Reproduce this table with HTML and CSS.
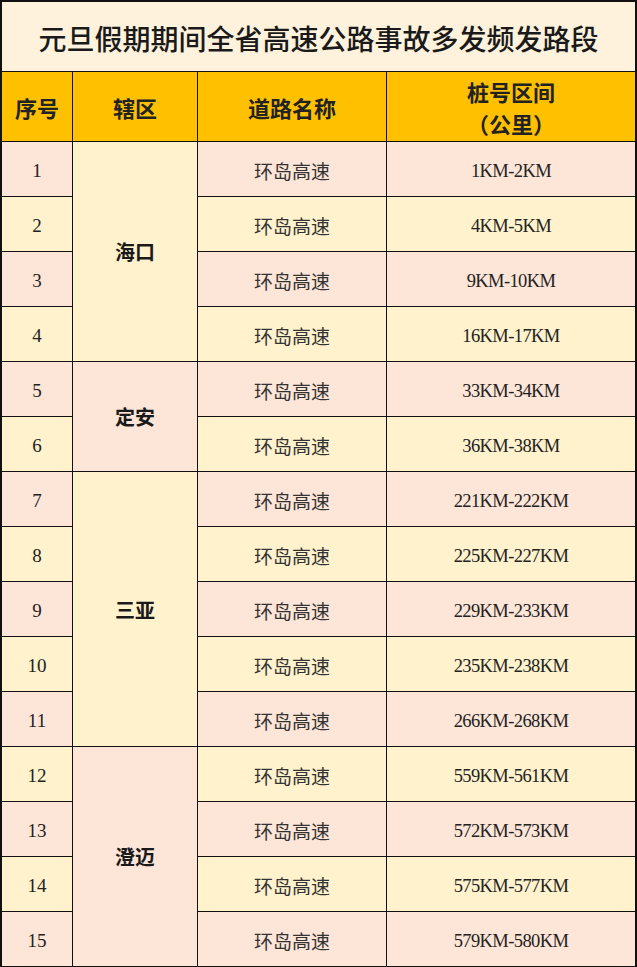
FILE: index.html
```html
<!DOCTYPE html>
<html lang="zh-CN">
<head>
<meta charset="utf-8">
<title>元旦假期期间全省高速公路事故多发频发路段</title>
<link rel="stylesheet" href="styles.css">
</head>
<body>
<div class="sheet">
  <div class="title">元旦假期期间全省高速公路事故多发频发路段</div>

  <div class="head c1">序号</div>
  <div class="head c2">辖区</div>
  <div class="head c3">道路名称</div>
  <div class="head c4"><span>桩号区间</span><span>（公里）</span></div>

  <div class="num pink">1</div>
  <div class="dist cream span4">海口</div>
  <div class="road pink">环岛高速</div>
  <div class="km pink">1KM-2KM</div>

  <div class="num cream">2</div>
  <div class="road cream">环岛高速</div>
  <div class="km cream">4KM-5KM</div>

  <div class="num pink">3</div>
  <div class="road pink">环岛高速</div>
  <div class="km pink">9KM-10KM</div>

  <div class="num cream">4</div>
  <div class="road cream">环岛高速</div>
  <div class="km cream">16KM-17KM</div>

  <div class="num pink">5</div>
  <div class="dist pink span2">定安</div>
  <div class="road pink">环岛高速</div>
  <div class="km pink">33KM-34KM</div>

  <div class="num cream">6</div>
  <div class="road cream">环岛高速</div>
  <div class="km cream">36KM-38KM</div>

  <div class="num pink">7</div>
  <div class="dist cream span5">三亚</div>
  <div class="road pink">环岛高速</div>
  <div class="km pink">221KM-222KM</div>

  <div class="num cream">8</div>
  <div class="road cream">环岛高速</div>
  <div class="km cream">225KM-227KM</div>

  <div class="num pink">9</div>
  <div class="road pink">环岛高速</div>
  <div class="km pink">229KM-233KM</div>

  <div class="num cream">10</div>
  <div class="road cream">环岛高速</div>
  <div class="km cream">235KM-238KM</div>

  <div class="num pink">11</div>
  <div class="road pink">环岛高速</div>
  <div class="km pink">266KM-268KM</div>

  <div class="num cream">12</div>
  <div class="dist pink span4">澄迈</div>
  <div class="road cream">环岛高速</div>
  <div class="km cream">559KM-561KM</div>

  <div class="num pink">13</div>
  <div class="road pink">环岛高速</div>
  <div class="km pink">572KM-573KM</div>

  <div class="num cream">14</div>
  <div class="road cream">环岛高速</div>
  <div class="km cream">575KM-577KM</div>

  <div class="num pink">15</div>
  <div class="road pink">环岛高速</div>
  <div class="km pink">579KM-580KM</div>
</div>
</body>
</html>
```

FILE: styles.css
```css
html, body {
  margin: 0;
  padding: 0;
  background: #ffffff;
}

.sheet {
  width: 637px;
  box-sizing: border-box;
  border: 2px solid #111;
  background: #111;
  display: grid;
  grid-template-columns: 70px 124px 188px 1fr;
  grid-template-rows: 69px 69px repeat(15, 54px);
  gap: 1px;
  font-family: "Noto Sans CJK SC", sans-serif;
  color: #222;
}

.sheet > div {
  display: flex;
  align-items: center;
  justify-content: center;
}

.title {
  grid-column: 1 / 5;
  background: #fef2dc;
  font-size: 28px;
  font-weight: 500;
  color: #1a1a1a;
  padding-top: 2px;
}

.head {
  background: #ffc000;
  font-size: 22px;
  font-weight: 700;
  color: #222;
}

.head.c4 {
  flex-direction: column;
  line-height: 32px;
}

.c1 { grid-column: 1; }
.c2 { grid-column: 2; }
.c3 { grid-column: 3; }
.c4 { grid-column: 4; }

.num {
  grid-column: 1;
  font-family: "Liberation Serif", serif;
  font-size: 19px;
  color: #222;
  padding-top: 4px;
}

.dist {
  grid-column: 2;
  font-size: 20px;
  font-weight: 700;
  color: #1a1a1a;
}

.span2 { grid-row: span 2; }
.span4 { grid-row: span 4; }
.span5 { grid-row: span 5; }

.road {
  grid-column: 3;
  font-size: 19px;
  color: #333;
  padding-top: 2px;
}

.km {
  grid-column: 4;
  font-family: "Liberation Serif", serif;
  font-size: 18.5px;
  letter-spacing: -0.6px;
  color: #222;
  padding-top: 4px;
}

.pink { background: #fde5d8; }
.cream { background: #fff2cd; }
```
